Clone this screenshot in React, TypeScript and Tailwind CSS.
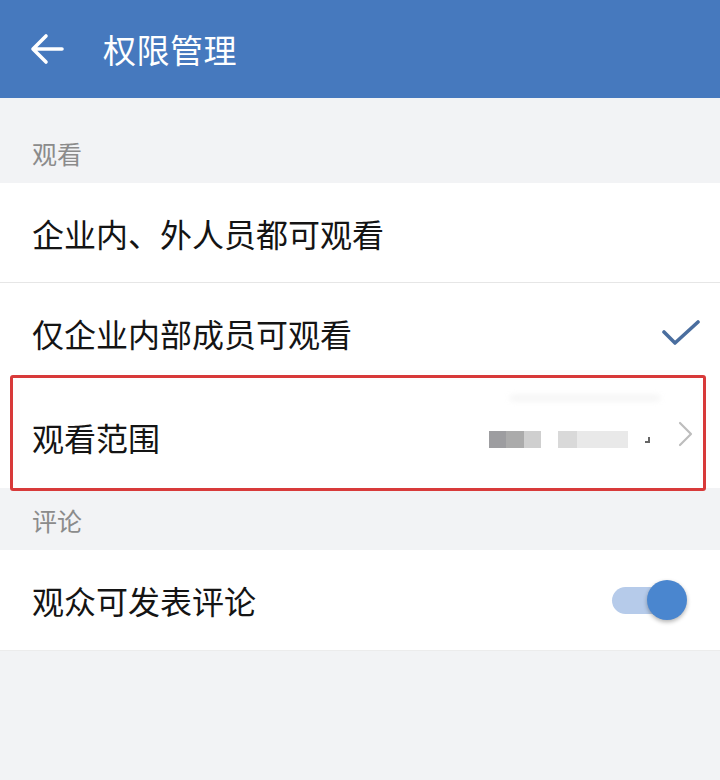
import React from "react";

const font = { fontFamily: '"Noto Sans CJK SC", "Noto Sans", sans-serif' };

export default function App() {
  return (
    <div className="w-[720px] h-[780px] bg-[#f2f3f5] overflow-hidden" style={font}>
      {/* Header */}
      <div className="h-[98px] bg-[#4679be] flex items-center">
        <svg width="34" height="32" viewBox="0 0 34 32" className="ml-[30px]">
          <path d="M32 16H4M16 3L3 16l13 13" fill="none" stroke="#fff" strokeWidth="3.6" strokeLinecap="round" strokeLinejoin="round" />
        </svg>
        <div className="ml-[39px] text-white text-[33px] leading-none tracking-[0.5px]">权限管理</div>
      </div>

      {/* Section 观看 */}
      <div className="h-[85px] flex items-end pl-[32px] pb-[17px]">
        <span className="text-[25px] leading-none text-[#8b8b8b]">观看</span>
      </div>

      <div className="bg-white">
        <div className="h-[100px] flex items-center pl-[32px] border-b border-[#e6e6e6]">
          <span className="text-[32px] leading-none text-[#141414]">企业内、外人员都可观看</span>
        </div>
        <div className="h-[99px] flex items-center pl-[32px] pr-[20px] justify-between">
          <span className="text-[32px] leading-none text-[#141414]">仅企业内部成员可观看</span>
          <svg width="40" height="30" viewBox="0 0 40 30">
            <path d="M4 14l11 11L38 4" fill="none" stroke="#4a6e9f" strokeWidth="3.6" strokeLinecap="round" strokeLinejoin="round" />
          </svg>
        </div>
        <div className="relative h-[106px] flex items-center pl-[32px]">
          <span className="text-[32px] leading-none text-[#141414] mt-[4px]">观看范围</span>
          <div className="ml-auto flex items-center mr-[26px] mt-[8px]">
            <div className="flex h-[17px] w-[52px] blur-[0.6px]">
              <div className="flex-1 bg-[#9d9da0]" />
              <div className="flex-1 bg-[#ababab]" />
              <div className="flex-1 bg-[#cfcfcf]" />
            </div>
            <div className="flex h-[17px] w-[70px] ml-[17px] blur-[0.6px]">
              <div className="w-[19px] bg-[#d9d9d9]" />
              <div className="flex-1 bg-[#e9e9e9]" />
            </div>
            <div className="ml-[17px] w-[5px] h-[6px] border-r-2 border-b-2 border-[#666] mt-[2px]" />
            <svg width="16" height="26" viewBox="0 0 16 26" className="ml-[28px] -mt-[10px]">
              <path d="M2 2l11 11L2 24" fill="none" stroke="#bdbdbd" strokeWidth="2.2" strokeLinecap="round" strokeLinejoin="round" />
            </svg>
          </div>
          <div className="absolute left-[510px] top-[14px] w-[150px] h-[4px] bg-[#eeeeee] blur-[3px] rounded-full" />
          {/* annotation box */}
          <div className="absolute left-[10px] top-[-7px] w-[696px] h-[116px] border-[3px] border-[#d83a3a] rounded-[3px]" />
        </div>
      </div>

      {/* Section 评论 */}
      <div className="h-[62px] flex items-end pl-[32px] pb-[17px]">
        <span className="text-[25px] leading-none text-[#8b8b8b]">评论</span>
      </div>

      <div className="bg-white h-[101px] flex items-center pl-[32px] border-b border-[#ececec]">
        <span className="text-[32px] leading-none text-[#141414]">观众可发表评论</span>
        <div className="relative ml-auto mr-[40px] w-[68px] h-[40px] flex items-center">
          <div className="w-[62px] h-[27px] rounded-full bg-[#b6cbea]" />
          <div className="absolute right-[-7px] top-0 w-[40px] h-[40px] rounded-full bg-[#4a86cf] shadow-[0_2px_4px_rgba(0,0,0,0.3)]" />
        </div>
      </div>
    </div>
  );
}
